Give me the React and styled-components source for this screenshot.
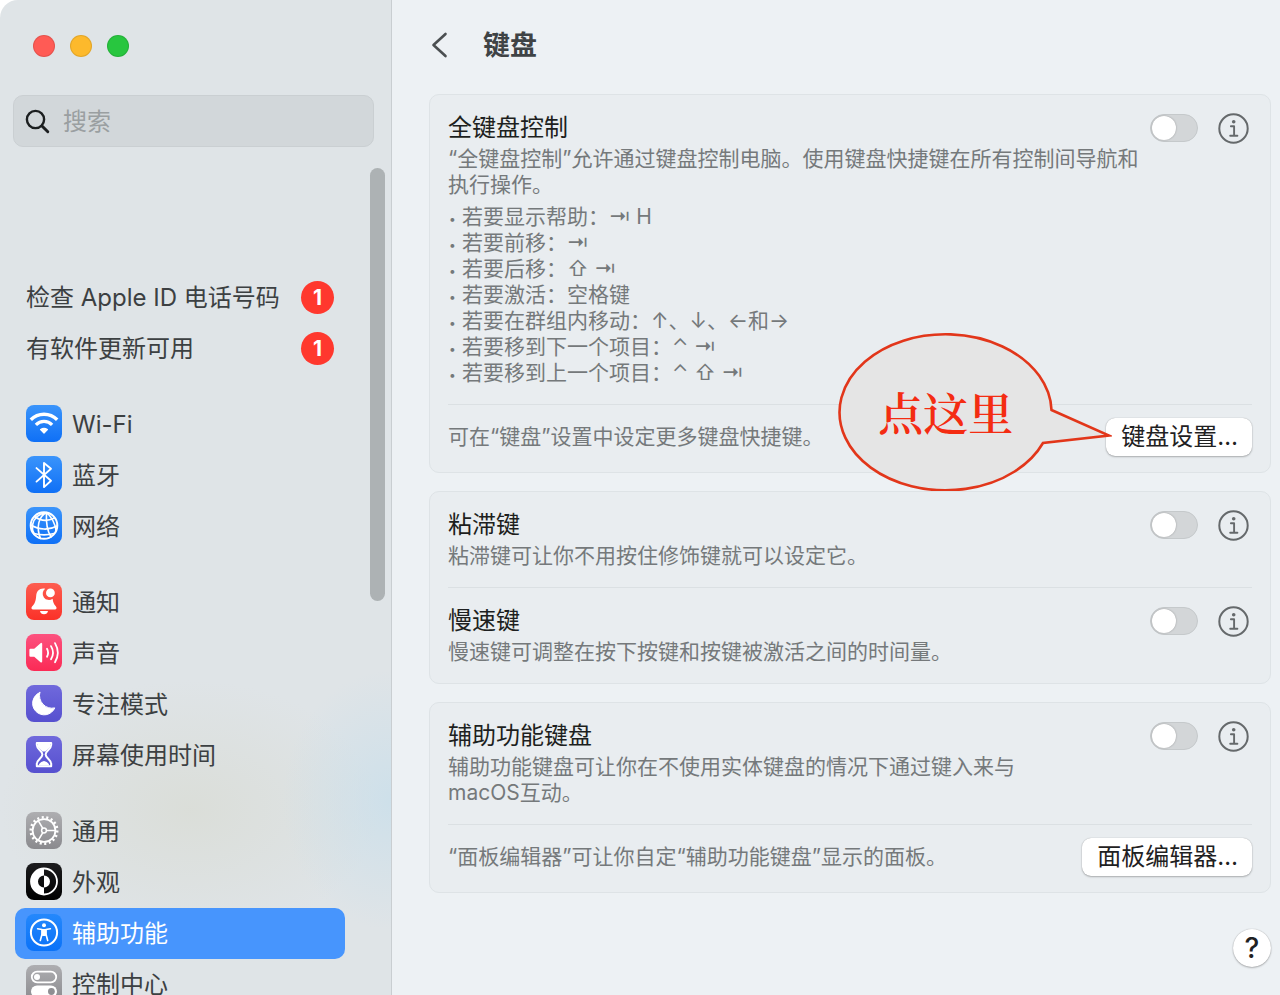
import React from 'react';
import styled, { createGlobalStyle, css } from 'styled-components';

const GlobalStyle = createGlobalStyle`
  *, *::before, *::after { box-sizing: border-box; }
  body {
    margin: 0;
    background: #fff;
    font-family: Inter, "Noto Sans CJK SC", sans-serif;
  }
  button, input { font-family: inherit; }
`;

const Window = styled.div`
  display: grid;
  grid-template-columns: 392px minmax(0, 1fr);
  height: 100vh;
  overflow: hidden;
  border-top-left-radius: 18px;
`;

/* ---------- Sidebar ---------- */

const Sidebar = styled.aside`
  position: relative;
  display: flex;
  flex-direction: column;
  min-height: 0;
  border-right: 1px solid #c9ced1;
  background:
    radial-gradient(ellipse 110px 130px at 392px 800px, rgba(198, 222, 235, 0.7), rgba(198, 222, 235, 0)),
    radial-gradient(ellipse 190px 130px at 190px 810px, rgba(218, 221, 215, 0.9), rgba(218, 221, 215, 0)),
    #dfe4e7;
`;

const TrafficLights = styled.div`
  display: flex;
  gap: 15px;
  padding: 35px 33px 0;
`;

const Light = styled.button`
  width: 22px;
  height: 22px;
  padding: 0;
  border: 1px solid rgba(0, 0, 0, 0.1);
  border-radius: 50%;
  background: ${(p) => p.$color};
`;

const SearchBox = styled.label`
  display: flex;
  align-items: center;
  gap: 13px;
  height: 52px;
  margin: 38px 17px 0 13px;
  padding: 0 12px 0 11px;
  border: 1px solid #cacfd2;
  border-radius: 10px;
  background: #d2d7da;
`;

const SearchInput = styled.input`
  flex: 1;
  min-width: 0;
  padding: 2px 0 0;
  border: 0;
  outline: 0;
  background: transparent;
  font-size: 24px;
  line-height: 30px;
  color: #2b2e30;
  &::placeholder { color: #9a9fa1; opacity: 1; }
`;

const SidebarNav = styled.nav`
  flex: 1;
  min-height: 0;
  display: flex;
  flex-direction: column;
  gap: 25px;
  padding: 125px 46px 0 15px;
  overflow-y: auto;
  scrollbar-width: none;
`;

const NavGroup = styled.ul`
  margin: 0;
  padding: 0;
  list-style: none;
`;

const NavLink = styled.a`
  display: flex;
  align-items: center;
  gap: 10px;
  height: 51px;
  padding: 0 11px;
  border-radius: 10px;
  font-size: 24px;
  line-height: 30px;
  white-space: nowrap;
  text-decoration: none;
  color: #3c4042;
  ${(p) => p.$selected && css`
    background: #4795fd;
    color: #fff;
  `}
`;

const Badge = styled.span`
  width: 33px;
  height: 33px;
  margin-left: auto;
  border-radius: 50%;
  background: #ff382e;
  color: #fff;
  font-size: 21px;
  font-weight: 700;
  line-height: 33px;
  text-align: center;
`;

const Tile = styled.span`
  display: block;
  flex: none;
  width: 36px;
  height: 37px;
  margin-bottom: 2px;
  border-radius: 8px;
  background: linear-gradient(${(p) => p.$from}, ${(p) => p.$to});
  svg { display: block; }
`;

const ScrollThumb = styled.div`
  position: absolute;
  top: 168px;
  right: 6px;
  width: 15px;
  height: 433px;
  border-radius: 8px;
  background: #adb2b4;
`;

/* ---------- Main pane ---------- */

const Pane = styled.main`
  min-width: 0;
  padding: 24px 9px 0 37px;
  overflow: hidden;
  background: #edf1f4;
`;

const PaneHeader = styled.header`
  display: flex;
  align-items: center;
  gap: 31px;
  height: 42px;
  margin-bottom: 28px;
`;

const BackButton = styled.button`
  display: block;
  padding: 0;
  border: 0;
  background: none;
  svg { display: block; }
`;

const PaneTitle = styled.h1`
  margin: 0;
  padding-top: 2px;
  font-size: 27px;
  font-weight: 700;
  line-height: 36px;
  color: #3f4345;
`;

const Card = styled.section`
  margin-bottom: 18px;
  padding: 0 18px;
  border: 1px solid #dee3e6;
  border-radius: 10px;
  background: #e9edf0;
`;

const Setting = styled.div`
  display: flex;
  align-items: flex-start;
  gap: 16px;
  padding: 18px 0;
  & + & { border-top: 1px solid #dbe0e3; }
`;

const SettingBody = styled.div`
  flex: 1;
  min-width: 0;
`;

const SettingLabel = styled.label`
  display: block;
  font-size: 24px;
  line-height: 30px;
  color: #1d1f20;
`;

const Description = styled.p`
  margin: 3px 0 0;
  font-size: 21px;
  line-height: 26px;
  white-space: nowrap;
  color: #75797b;
`;

const Hints = styled.ul`
  margin: 6px 0 0;
  padding: 0;
  list-style: none;
  font-size: 21px;
  line-height: 26px;
  color: #75797b;
`;

const Hint = styled.li`
  display: flex;
  height: 26px;
  white-space: pre;
  &::before {
    content: "•";
    flex: none;
    width: 14px;
    font-size: 12px;
    line-height: 30px;
    text-indent: 1px;
  }
`;

const Actions = styled.div`
  display: flex;
  align-items: center;
  gap: 20px;
  height: 30px;
  padding-right: 3px;
`;

const Switch = styled.input`
  appearance: none;
  position: relative;
  width: 48px;
  height: 28px;
  margin: 0;
  border: 1px solid #c5c9cb;
  border-radius: 14px;
  background: #d3d6d8;
  &::before {
    content: "";
    position: absolute;
    top: 1px;
    left: 1px;
    width: 24px;
    height: 24px;
    border-radius: 50%;
    background: #fff;
    box-shadow: 0 0 2px rgba(0, 0, 0, 0.3);
  }
  &:checked { background: #2f86fb; }
  &:checked::before { left: 21px; }
`;

const IconButton = styled.button`
  display: block;
  padding: 0;
  border: 0;
  background: none;
  svg { display: block; }
`;

const CardFooter = styled.div`
  display: flex;
  align-items: center;
  justify-content: space-between;
  height: 68px;
  padding-bottom: 4px;
  border-top: 1px solid #dbe0e3;
`;

const FooterText = styled.p`
  margin: 0;
  font-size: 21px;
  line-height: 26px;
  white-space: nowrap;
  color: #75797b;
`;

const ButtonAnchor = styled.div`
  position: relative;
`;

const PushButton = styled.button`
  display: block;
  height: 38px;
  padding: 0 14px 0 15px;
  border: 0;
  border-radius: 9px;
  background: #fff;
  box-shadow: 0 0 1px rgba(0, 0, 0, 0.3), 0 1px 2px rgba(0, 0, 0, 0.25);
  font-size: 24px;
  line-height: 36px;
  white-space: nowrap;
  color: #1f2122;
`;

const Callout = styled.div`
  position: absolute;
  top: -87px;
  right: calc(100% - 6px);
  width: 274px;
  height: 160px;
  pointer-events: none;
  svg { display: block; }
`;

const CalloutText = styled.span`
  position: absolute;
  inset: 3px 59px 0 0;
  display: flex;
  align-items: center;
  justify-content: center;
  font-family: "Noto Serif CJK SC", "Noto Sans CJK SC", serif;
  font-size: 45px;
  font-weight: 600;
  line-height: 54px;
  color: #f42c12;
`;

const HelpRow = styled.div`
  display: flex;
  justify-content: flex-end;
  padding-top: 18px;
`;

const HelpButton = styled.button`
  width: 38px;
  height: 38px;
  padding: 0;
  border: 0;
  border-radius: 50%;
  background: #fff;
  box-shadow: 0 0 1px rgba(0, 0, 0, 0.3), 0 1px 2px rgba(0, 0, 0, 0.25);
  font-size: 28px;
  font-weight: 500;
  line-height: 38px;
  color: #1f2122;
`;

/* ---------- Icons ---------- */

const Glyph = ({ children }) => (
  <svg width="36" height="37" viewBox="0 0 36 36" fill="none" stroke="#fff" strokeLinecap="round" strokeLinejoin="round" aria-hidden="true">
    {children}
  </svg>
);

const icons = {
  wifi: {
    from: '#3a94fb', to: '#0f70f6',
    art: (
      <>
        <path d="M4.8 14.300a18.600 18.600 0 0 1 26.400 0" strokeWidth="3.400" strokeLinecap="butt" />
        <path d="M9.900 19.300a11.500 11.500 0 0 1 16.200 0" strokeWidth="3.300" strokeLinecap="butt" />
        <path d="M14.600 24q3.400-2.200 6.800 0L18 27.600z" fill="#fff" strokeWidth="1.200" />
      </>
    ),
  },
  bluetooth: {
    from: '#3a94fb', to: '#0f70f6',
    art: <path d="M10.500 11.600 25 24.200l-7 6.400V6.400l7 5.800-14.500 12.900" strokeWidth="1.900" />,
  },
  network: {
    from: '#3a94fb', to: '#0f70f6',
    art: (
      <g strokeWidth="1.600">
        <circle cx="18" cy="18" r="13.300" strokeWidth="2" />
        <path d="M20.500 5C12.500 9 10 20 14.500 31M20.500 5c-.5 8 .5 18 4.500 24.500M20.500 5c5 4 9 12 9.500 18M20.500 5C14 6 8 10 6.500 17.500c-.5 3 .5 7 2 9.500" />
        <path d="M8.500 9c6 4.500 13 5 20 1.500M4.900 17.500c8 5 18 5.500 26.200 1M8 26c6.500 1.800 13.500 1.800 20 0" />
      </g>
    ),
  },
  bell: {
    from: '#fd5d50', to: '#fb3128',
    art: (
      <g fill="#fff" stroke="none">
        <path d="M19.200 5.200c-5.400-1-8.600 2-9 7-.4 6-1.600 8-4 10.600-1.400 1.600-.8 3.200 1 3.200h21.600c1.800 0 2.400-1.600 1-3.200-1.900-2-2.800-4.200-3.200-7.600a5.900 5.900 0 0 1-7.400-10z" />
        <circle cx="24.400" cy="9.400" r="4.400" />
        <path d="M14 27.600h8a4.100 4.100 0 0 1-8 0z" />
      </g>
    ),
  },
  sound: {
    from: '#fc5280', to: '#fb2a55',
    art: (
      <>
        <path d="M4.400 15.200h4.200l6.600-5.800v17.600l-6.600-5.800H4.400z" fill="#fff" strokeWidth="2" />
        <path d="M21 14.200q2.200 4 0 8M25 11.600q4 6.600 0 13.200M29 8.600q5.600 9.600 0 19.200" strokeWidth="1.800" />
      </>
    ),
  },
  moon: {
    from: '#7069dc', to: '#5650cf',
    art: <path d="M13.800 7a11.600 11.600 0 1 0 15 15.400A12.600 12.600 0 0 1 13.800 7z" fill="#fff" strokeWidth="1" />,
  },
  hourglass: {
    from: '#7069dc', to: '#5650cf',
    art: (
      <>
        <path d="M10.800 6.400h14.400v2.200c0 4-5.600 5.800-5.600 9.400s5.600 5 5.600 9.400v2.400H10.800v-2.400c0-4.400 5.600-5.800 5.600-9.400s-5.600-5.400-5.600-9.400z" strokeWidth="2" />
        <path d="M12 7h12v3.500l-4.600 4.500h-2.800L12 10.500zM12.600 29c.6-2.600 3-4 5.400-4.600 2.400.6 4.800 2 5.400 4.600z" fill="#fff" stroke="none" />
      </>
    ),
  },
  gear: {
    from: '#aeaeb1', to: '#8a8a8e',
    art: (
      <g strokeLinecap="butt">
        <circle cx="18" cy="18" r="11.400" strokeWidth="1.800" />
        <circle cx="18" cy="18" r="13.200" strokeWidth="2.600" pathLength="72" strokeDasharray="1.800 2.200" />
        <circle cx="18" cy="18" r="2.400" strokeWidth="1.500" />
        <path d="M20.400 18h9M16.800 15.900l-4.600-7.800M16.800 20.100l-4.600 7.800" strokeWidth="1.600" />
      </g>
    ),
  },
  appearance: {
    from: '#1c1c1e', to: '#000',
    art: (
      <>
        <circle cx="18" cy="18" r="13" strokeWidth="1.800" />
        <path d="M18 5a13 13 0 0 0 0 26v-7a6 6 0 0 1 0-12zM18 12a6 6 0 0 1 0 12z" fill="#fff" stroke="none" />
      </>
    ),
  },
  accessibility: {
    from: '#2488fc', to: '#0a72f8',
    art: (
      <>
        <circle cx="18" cy="18" r="13.100" strokeWidth="2" />
        <circle cx="18" cy="10.800" r="2" fill="#fff" stroke="none" />
        <path d="M11.600 14.300 16 15v4.800L14.300 26M24.400 14.300 20 15v4.800l1.700 6.200" strokeWidth="1.600" />
        <path d="M15.500 14.500h5v6l-1 1h-3l-1-1z" fill="#fff" stroke="none" />
      </>
    ),
  },
  control: {
    from: '#aeaeb1', to: '#8a8a8e',
    art: (
      <>
        <rect x="5.800" y="6.200" width="24.400" height="10.600" rx="5.300" strokeWidth="1.800" />
        <circle cx="11" cy="11.500" r="3" fill="#fff" stroke="none" />
        <rect x="5" y="20" width="26" height="12" rx="6" fill="#fff" stroke="none" />
        <circle cx="25.400" cy="26" r="3.400" fill="#8f8f93" stroke="none" />
      </>
    ),
  },
};

const SearchIcon = () => (
  <svg width="25" height="25" viewBox="0 0 25 25" fill="none" stroke="#1c1f20" strokeWidth="2.400" strokeLinecap="round" aria-hidden="true">
    <circle cx="10.500" cy="10.500" r="8.600" />
    <path d="m17 17 5.800 5.800" strokeWidth="2.900" />
  </svg>
);

const InfoIcon = () => (
  <svg width="31" height="31" viewBox="0 0 31 31" fill="none" stroke="#65696b" strokeLinecap="round" strokeLinejoin="round" aria-hidden="true">
    <circle cx="15.500" cy="15.500" r="14.200" strokeWidth="2" />
    <path d="M12.900 13.200h3.200v9.300M12.200 22.700h7.200" strokeWidth="1.900" />
    <circle cx="15.700" cy="8.800" r="1.800" fill="#65696b" stroke="none" />
  </svg>
);

/* ---------- Content ---------- */

const notices = ['检查 Apple ID 电话号码', '有软件更新可用'];

const groups = [
  [['wifi', 'Wi-Fi'], ['bluetooth', '蓝牙'], ['network', '网络']],
  [['bell', '通知'], ['sound', '声音'], ['moon', '专注模式'], ['hourglass', '屏幕使用时间']],
  [['gear', '通用'], ['appearance', '外观'], ['accessibility', '辅助功能'], ['control', '控制中心']],
];

const hints = [
  '若要显示帮助：⇥ H',
  '若要前移：⇥',
  '若要后移：⇧ ⇥',
  '若要激活：空格键',
  '若要在群组内移动：↑、↓、←和→',
  '若要移到下一个项目：⌃ ⇥',
  '若要移到上一个项目：⌃ ⇧ ⇥',
];

function SettingRow({ id, title, lines, children }) {
  return (
    <Setting>
      <SettingBody>
        <SettingLabel htmlFor={id}>{title}</SettingLabel>
        <Description>
          {lines.map((line, i) => (
            <React.Fragment key={line}>
              {i > 0 && <br />}
              {line}
            </React.Fragment>
          ))}
        </Description>
        {children}
      </SettingBody>
      <Actions>
        <Switch type="checkbox" id={id} />
        <IconButton type="button" aria-label={title}><InfoIcon /></IconButton>
      </Actions>
    </Setting>
  );
}

export default function App() {
  return (
    <>
      <GlobalStyle />
      <Window>
        <Sidebar>
          <TrafficLights>
            <Light type="button" aria-label="关闭" $color="#ff5b55" />
            <Light type="button" aria-label="最小化" $color="#fdb92c" />
            <Light type="button" aria-label="缩放" $color="#28c63f" />
          </TrafficLights>
          <SearchBox>
            <SearchIcon />
            <SearchInput type="search" placeholder="搜索" aria-label="搜索" />
          </SearchBox>
          <SidebarNav>
            <NavGroup>
              {notices.map((text) => (
                <li key={text}>
                  <NavLink href="#">{text}<Badge>1</Badge></NavLink>
                </li>
              ))}
            </NavGroup>
            {groups.map((items) => (
              <NavGroup key={items[0][0]}>
                {items.map(([icon, text]) => (
                  <li key={icon}>
                    <NavLink href="#" $selected={icon === 'accessibility'}>
                      <Tile $from={icons[icon].from} $to={icons[icon].to}>
                        <Glyph>{icons[icon].art}</Glyph>
                      </Tile>
                      {text}
                    </NavLink>
                  </li>
                ))}
              </NavGroup>
            ))}
          </SidebarNav>
          <ScrollThumb />
        </Sidebar>

        <Pane>
          <PaneHeader>
            <BackButton type="button" aria-label="返回">
              <svg width="23" height="28" viewBox="0 0 23 28" fill="none" stroke="#4b4f51" strokeWidth="2.600" strokeLinecap="round" strokeLinejoin="round" aria-hidden="true">
                <path d="M16.500 3 4.500 14l12 11" />
              </svg>
            </BackButton>
            <PaneTitle>键盘</PaneTitle>
          </PaneHeader>

          <Card>
            <SettingRow
              id="full-keyboard"
              title="全键盘控制"
              lines={['“全键盘控制”允许通过键盘控制电脑。使用键盘快捷键在所有控制间导航和', '执行操作。']}
            >
              <Hints>
                {hints.map((hint) => <Hint key={hint}>{hint}</Hint>)}
              </Hints>
            </SettingRow>
            <CardFooter>
              <FooterText>可在“键盘”设置中设定更多键盘快捷键。</FooterText>
              <ButtonAnchor>
                <PushButton type="button">键盘设置…</PushButton>
                <Callout>
                  <svg width="274" height="160" viewBox="0 0 274 160" aria-hidden="true">
                    <path d="M213.500 79 271 104.500 205 112A106 78 0 1 1 213.500 79z" fill="#e5e5e5" stroke="#e2361a" strokeWidth="2.600" />
                  </svg>
                  <CalloutText>点这里</CalloutText>
                </Callout>
              </ButtonAnchor>
            </CardFooter>
          </Card>

          <Card>
            <SettingRow id="sticky-keys" title="粘滞键" lines={['粘滞键可让你不用按住修饰键就可以设定它。']} />
            <SettingRow id="slow-keys" title="慢速键" lines={['慢速键可调整在按下按键和按键被激活之间的时间量。']} />
          </Card>

          <Card>
            <SettingRow
              id="accessibility-keyboard"
              title="辅助功能键盘"
              lines={['辅助功能键盘可让你在不使用实体键盘的情况下通过键入来与', 'macOS互动。']}
            />
            <CardFooter>
              <FooterText>“面板编辑器”可让你自定“辅助功能键盘”显示的面板。</FooterText>
              <PushButton type="button">面板编辑器…</PushButton>
            </CardFooter>
          </Card>

          <HelpRow>
            <HelpButton type="button" aria-label="帮助">?</HelpButton>
          </HelpRow>
        </Pane>
      </Window>
    </>
  );
}
